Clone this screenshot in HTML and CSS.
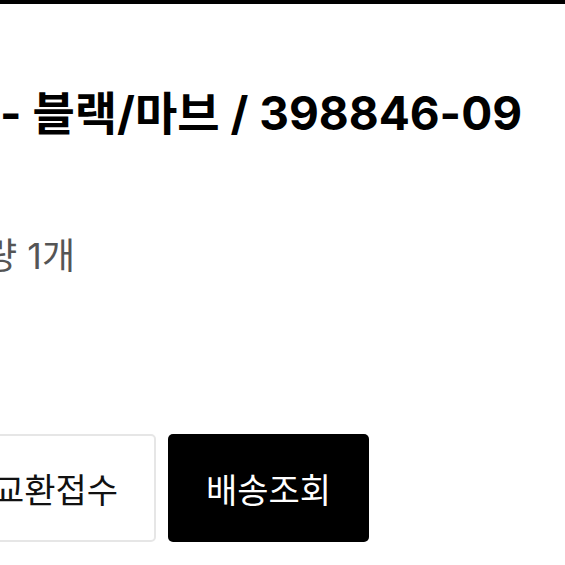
FILE: index.html
```html
<!DOCTYPE html>
<html lang="ko">
<head>
    <meta charset="UTF-8">
    <meta name="viewport" content="width=device-width, initial-scale=1.0">
    <title>주문 상세</title>
    <link rel="stylesheet" href="styles.css">
</head>
<body>

<div class="top-bar"></div>

<div class="pedido">
    <h1 class="producto">- 블랙/마브 / 398846-09</h1>
    <div class="cantidad">수량 1개</div>

    <div class="botones">
        <button class="btn-blanco">교환접수</button>
        <button class="btn-negro">배송조회</button>
    </div>
</div>

</body>
</html>
```

FILE: styles.css
```css
body {
    font-family: Inter, "Noto Sans CJK KR", sans-serif;
    margin: 0;
    background: #fff;
    overflow: hidden;
}

.top-bar {
    height: 4px;
    background-color: #000;
}

.pedido {
    margin-left: -45px;
}

.producto {
    margin: 0;
    padding: 81px 0 0 45px;
    font-size: 46px;
    font-weight: 700;
    line-height: 56px;
    color: #000;
    white-space: nowrap;
}

.cantidad {
    margin-top: 94px;
    margin-left: -4px;
    font-size: 36px;
    line-height: 42px;
    color: #555;
    white-space: nowrap;
}

.botones {
    display: flex;
    gap: 12px;
    margin-top: 157px;
}

.btn-blanco,
.btn-negro {
    width: 201px;
    height: 108px;
    font-family: inherit;
    font-size: 34px;
    border-radius: 5px;
    cursor: pointer;
}

.btn-blanco {
    background: #fff;
    color: #111;
    border: 2px solid #e6e6e6;
}

.btn-negro {
    background: #000;
    color: #fff;
    border: none;
}
```
